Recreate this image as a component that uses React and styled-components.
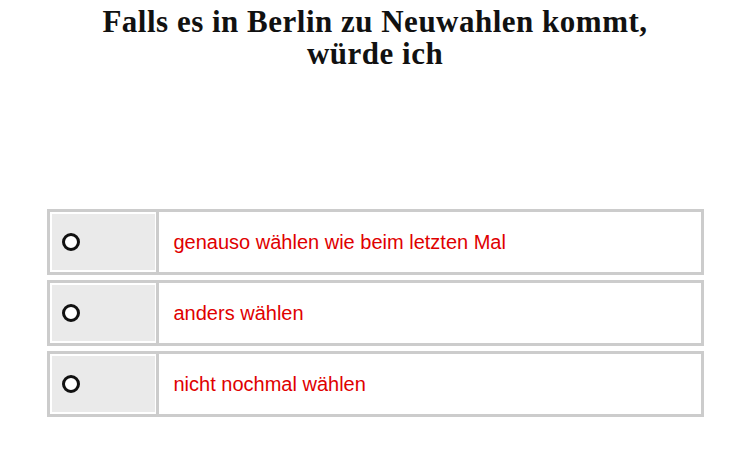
import React from "react";
import styled, { createGlobalStyle } from "styled-components";

const Global = createGlobalStyle`
  html, body { margin: 0; padding: 0; background: #fff; }
  body { width: 750px; height: 468px; overflow: hidden; }
`;

const Page = styled.div`
  display: flex;
  flex-direction: column;
  align-items: center;
  padding-top: 6px;
`;

const Title = styled.h1`
  margin: 0;
  font-family: "Liberation Serif", "Times New Roman", serif;
  font-weight: bold;
  font-size: 31px;
  letter-spacing: 0.5px;
  line-height: 32px;
  color: #111;
  text-align: center;
  width: 580px;
`;

const Options = styled.div`
  margin-top: 139px;
  width: 657px;
  display: flex;
  flex-direction: column;
  gap: 5px;
`;

const Row = styled.label`
  box-sizing: border-box;
  height: 66px;
  border: 3px solid #ccc;
  padding: 2px;
  display: flex;
  cursor: pointer;
`;

const RadioCell = styled.div`
  width: 103px;
  background: #eaeaea;
  display: flex;
  align-items: center;
  padding-left: 10px;
  box-sizing: border-box;
`;

const Divider = styled.div`
  width: 3px;
  margin: -2px 0 -2px 1px;
  background: #ccc;
`;

const Radio = styled.span`
  box-sizing: border-box;
  width: 18px;
  height: 18px;
  border: 3px solid #111;
  border-radius: 50%;
  background: #fff;
`;

const Text = styled.div`
  flex: 1;
  display: flex;
  align-items: center;
  padding-left: 15px;
  font-family: "Liberation Sans", Arial, sans-serif;
  font-size: 20px;
  color: #e00000;
`;

const options = [
  "genauso wählen wie beim letzten Mal",
  "anders wählen",
  "nicht nochmal wählen",
];

export default function App() {
  return (
    <>
      <Global />
      <Page>
        <Title>Falls es in Berlin zu Neuwahlen kommt, würde ich</Title>
        <Options>
          {options.map((o) => (
            <Row key={o}>
              <RadioCell>
                <Radio />
              </RadioCell>
              <Divider />
              <Text>{o}</Text>
            </Row>
          ))}
        </Options>
      </Page>
    </>
  );
}
